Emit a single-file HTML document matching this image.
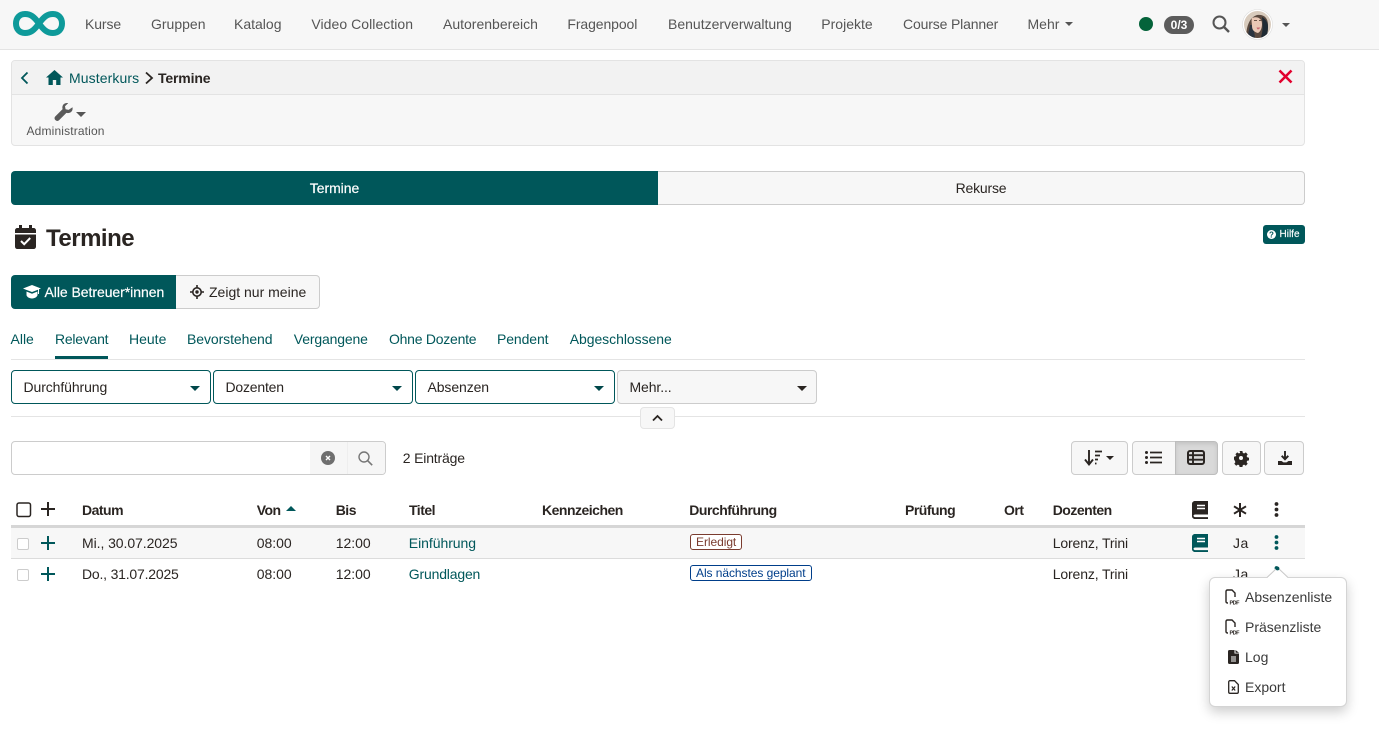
<!DOCTYPE html>
<html lang="de"><head><meta charset="utf-8"><title>Termine</title>
<style>
*{box-sizing:border-box}
html,body{margin:0;padding:0;width:1379px;height:735px;overflow:hidden;background:#fff;font-family:"Liberation Sans",sans-serif;font-size:14px;color:#2a2522}
.a{position:absolute;white-space:nowrap}
.t{position:absolute;white-space:nowrap;line-height:20px;height:20px}
.n{color:#555;top:14px}
.l{color:#00575a}
.b{font-weight:bold}
.th{top:500px;font-weight:bold;color:#2a2522;letter-spacing:-.5px}
.r1{top:533px}.r2{top:564px}
.box{position:absolute;border-radius:4px}
svg{position:absolute;overflow:visible}
.f{position:absolute;top:370px;width:200px;height:34px;border:1px solid #00575a;border-radius:4px;background:#fff;padding:0 11.500px;line-height:32px;color:#2a2522;letter-spacing:-.1px}
.car{position:absolute;width:0;height:0;border-left:5px solid transparent;border-right:5px solid transparent;border-top:5px solid #2a2522}
.btn{position:absolute;top:441px;height:34px;background:#f7f7f7;border:1px solid #ccc;border-radius:4px}
.tag{position:absolute;height:16px;line-height:14px;font-size:12px;border-radius:3px;padding:0 5px;background:#fff;white-space:nowrap;letter-spacing:-.06px}
</style></head><body>

<!-- navbar -->
<div class="a" style="left:0;top:0;width:1379px;height:50px;background:#f7f7f7;border-bottom:1px solid #e4e4e4"></div>
<svg style="left:13px;top:11px" width="52" height="25" viewBox="0 0 52 25"><path d="M26 12.500C21 5.500 17.500 3 12 3 6.500 3 3 7 3 12.500S6.500 22 12 22c5.500 0 9-2.500 14-9.500S34.500 3 40 3c5.500 0 9 4 9 9.500S45.500 22 40 22c-5.500 0-9-2.500-14-9.500z" fill="none" stroke="#0e9a9a" stroke-width="6"/></svg>
<div class="t n" style="left:85px;letter-spacing:-.1px">Kurse</div>
<div class="t n" style="left:151px">Gruppen</div>
<div class="t n" style="left:234px">Katalog</div>
<div class="t n" style="left:311.400px;letter-spacing:.05px">Video Collection</div>
<div class="t n" style="left:443px">Autorenbereich</div>
<div class="t n" style="left:567.400px;letter-spacing:-.1px">Fragenpool</div>
<div class="t n" style="left:668px">Benutzerverwaltung</div>
<div class="t n" style="left:821.300px">Projekte</div>
<div class="t n" style="left:903px;letter-spacing:-.15px">Course Planner</div>
<div class="t n" style="left:1027.500px">Mehr</div>
<div class="car" style="left:1065px;top:22px;border-top-color:#555;border-left-width:4px;border-right-width:4px;border-top-width:4px"></div>
<div class="a" style="left:1139px;top:17px;width:14px;height:14px;border-radius:50%;background:#04633a"></div>
<div class="a" style="left:1164px;top:16px;width:30px;height:18px;border-radius:9px;background:#5c5c5c;color:#fff;font-weight:bold;font-size:12px;line-height:18px;text-align:center">0/3</div>
<svg style="left:1212px;top:15px" width="18" height="18" viewBox="0 0 18 18"><circle cx="7.500" cy="7.500" r="6" fill="none" stroke="#555" stroke-width="2"/><path d="M12 12l5 5" stroke="#555" stroke-width="2.400"/></svg>
<svg style="left:1242px;top:9px" width="31" height="31" viewBox="0 0 31 31"><defs><clipPath id="av"><circle cx="15.500" cy="15.500" r="13.500"/></clipPath></defs><circle cx="15.500" cy="15.500" r="15" fill="#fff" stroke="#ddd" stroke-width=".6"/><g clip-path="url(#av)"><rect width="31" height="31" fill="#d8cbbd"/><path d="M4 31C4 20 6 9 15 6c7-1 11 3 11 10 0 6-1 11-2 15z" fill="#5b4a40"/><path d="M20 8c4 2 6 6 6 10 0 5-1 9-3 13h-5c3-7 3-15 2-23z" fill="#1f2a33"/><path d="M8 16c-1 5-2 10-3 15h8c0-5-1-10-3-15z" fill="#2a3440"/><path d="M10 9c5-2 10 0 10 6 0 5-2 8-4 9-4-1-6-3-6-7 0-3-1-5 0-8z" fill="#e9c8b6"/><path d="M14.500 18.500h4l-1.700 1.700h-1.500z" fill="#c66a72"/><path d="M12 11.500h3M17 11.500h2.500" stroke="#6b5448" stroke-width="1"/></g></svg>
<div class="car" style="left:1282px;top:23px;border-top-color:#555;border-left-width:4px;border-right-width:4px;border-top-width:4px"></div>

<!-- toolbar panel -->
<div class="a" style="left:11px;top:60px;width:1294px;height:86px;background:#f7f7f7;border:1px solid #e3e3e3;border-radius:4px"></div>
<div class="a" style="left:12px;top:61px;width:1292px;height:34px;background:#f2f2f2;border-bottom:1px solid #e3e3e3;border-radius:3px 3px 0 0"></div>
<svg style="left:19px;top:71px" width="12" height="14" viewBox="0 0 12 14"><path d="M8.500 1.500L3 7l5.500 5.500" fill="none" stroke="#00575a" stroke-width="1.800"/></svg>
<svg style="left:46px;top:70px" width="17" height="15" viewBox="0 0 17 15"><path d="M8.500 0L0 7.500h2.500V15h4.300v-5h3.400v5h4.300V7.500H17z" fill="#00575a"/></svg>
<div class="t l" style="left:69px;top:68px;letter-spacing:.1px">Musterkurs</div>
<svg style="left:144px;top:71px" width="11" height="14" viewBox="0 0 11 14"><path d="M2 1.500L8 7l-6 5.500" fill="none" stroke="#2a2522" stroke-width="1.800"/></svg>
<div class="t b" style="left:158px;top:68px;letter-spacing:-.15px">Termine</div>
<svg style="left:1278px;top:69px" width="15" height="15" viewBox="0 0 15 15"><path d="M1.500 1.500l12 12M13.500 1.500l-12 12" stroke="#e2002d" stroke-width="2.600"/></svg>
<svg style="left:54px;top:103px" width="19" height="18" viewBox="0 0 19 18"><path d="M18.500 4.300c.4 2.300-.3 4-1.800 5-1.300.9-2.900 1-4.300.6L5 17.300c-.9.900-2.400.9-3.400 0l-.4-.4c-.9-1-.9-2.500 0-3.400L8.600 6.100c-.5-1.400-.3-3 .6-4.300C10.200.4 12 -.3 14.200.1L11 3.300l.6 3 3 .6z" fill="#5a5a5a"/></svg>
<div class="car" style="left:76px;top:112px;border-top-color:#555;border-left-width:5px;border-right-width:5px;border-top-width:5px"></div>
<div class="t" style="left:26.500px;top:121px;font-size:12px;color:#555;letter-spacing:.15px">Administration</div>

<!-- segmented -->
<div class="a" style="left:11px;top:171px;width:647px;height:34px;background:#00575a;border-radius:4px 0 0 4px;color:#fff;text-align:center;line-height:34px;-webkit-text-stroke:.2px #fff;letter-spacing:-.05px">Termine</div>
<div class="a" style="left:658px;top:171px;width:647px;height:34px;background:#f7f7f7;border:1px solid #ccc;border-left:0;border-radius:0 4px 4px 0;color:#2a2522;text-align:center;line-height:32px;letter-spacing:-.2px">Rekurse</div>

<!-- title -->
<svg style="left:15px;top:225px" width="21" height="24" viewBox="0 0 21 24"><path d="M4 0h3v3h7V0h3v3h1.500C20 3 21 4 21 5.500V8H0V5.500C0 4 1 3 2.500 3H4zM0 9.500h21v12c0 1.500-1 2.500-2.500 2.500h-16C1 24 0 23 0 21.500z" fill="#2a2522"/><path d="M6 16l3.200 3.200L15.200 13" fill="none" stroke="#fff" stroke-width="2"/></svg>
<div class="t b" style="left:46px;top:225px;font-size:24px;line-height:28px;height:28px;color:#2a2522;letter-spacing:-.5px">Termine</div>
<div class="a" style="left:1263px;top:225px;width:42px;height:19px;background:#00575a;border-radius:3px;color:#fff;font-size:10px;line-height:19px;padding-left:16.500px;-webkit-text-stroke:.15px #fff">Hilfe</div>
<svg style="left:1267px;top:230px" width="9" height="9" viewBox="0 0 9 9"><circle cx="4.500" cy="4.500" r="4.500" fill="#fff"/><text x="4.500" y="7.500" font-size="8" font-weight="bold" fill="#00575a" text-anchor="middle" font-family="Liberation Sans">?</text></svg>

<!-- toggle -->
<div class="a" style="left:11px;top:275px;width:166px;height:34px;background:#00575a;border-radius:4px 0 0 4px"></div>
<svg style="left:23px;top:285px" width="18" height="14" viewBox="0 0 18 14"><path d="M9 0L0 3.500l3 1.200L9 7l6-2.300V9h1V4.300l2-.8zM3.500 6.500V10c0 1.500 2.500 3.500 5.500 3.500s5.500-2 5.500-3.500V6.500L9 8.700z" fill="#fff"/></svg>
<div class="t" style="left:44.500px;top:282px;color:#fff;-webkit-text-stroke:.2px #fff;letter-spacing:-.05px">Alle Betreuer*innen</div>
<div class="a" style="left:176px;top:275px;width:144px;height:34px;background:#f7f7f7;border:1px solid #ccc;border-left:0;border-radius:0 4px 4px 0"></div>
<svg style="left:190px;top:285px" width="14" height="14" viewBox="0 0 14 14"><circle cx="7" cy="7" r="4.200" fill="none" stroke="#2a2522" stroke-width="1.600"/><circle cx="7" cy="7" r="1.700" fill="#2a2522"/><path d="M7 0v3M7 11v3M0 7h3M11 7h3" stroke="#2a2522" stroke-width="1.600"/></svg>
<div class="t" style="left:209px;top:282px">Zeigt nur meine</div>

<!-- tabs -->
<div class="t l" style="left:10.500px;top:329px">Alle</div>
<div class="t l" style="left:55px;top:329px;letter-spacing:-.25px">Relevant</div>
<div class="t l" style="left:129px;top:329px">Heute</div>
<div class="t l" style="left:187px;top:329px;letter-spacing:-.08px">Bevorstehend</div>
<div class="t l" style="left:293.800px;top:329px;letter-spacing:-.15px">Vergangene</div>
<div class="t l" style="left:389px;top:329px;letter-spacing:-.25px">Ohne Dozente</div>
<div class="t l" style="left:497px;top:329px;letter-spacing:-.1px">Pendent</div>
<div class="t l" style="left:569.700px;top:329px;letter-spacing:-.05px">Abgeschlossene</div>
<div class="a" style="left:11px;top:359px;width:1294px;height:1px;background:#e4e4e4"></div>
<div class="a" style="left:55px;top:356px;width:53px;height:3px;background:#00575a"></div>

<!-- filters -->
<div class="f" style="left:11px">Durchführung</div><div class="car" style="left:190px;top:386px;border-top-color:#00474a"></div>
<div class="f" style="left:213px;letter-spacing:-.2px">Dozenten</div><div class="car" style="left:392px;top:386px;border-top-color:#00474a"></div>
<div class="f" style="left:415px">Absenzen</div><div class="car" style="left:594px;top:386px;border-top-color:#00474a"></div>
<div class="f" style="left:617px;background:#f7f7f7;border-color:#ccc">Mehr...</div><div class="car" style="left:797px;top:386px"></div>
<div class="a" style="left:11px;top:416px;width:1294px;height:1px;background:#e4e4e4"></div>
<div class="a" style="left:640px;top:407px;width:35px;height:22px;background:#f7f7f7;border:1px solid #e4e4e4;border-radius:4px"></div>
<svg style="left:652px;top:414px" width="11" height="8" viewBox="0 0 11 8"><path d="M1 6.500l4.500-4.500L10 6.500" fill="none" stroke="#2a2522" stroke-width="1.800"/></svg>

<!-- search -->
<div class="a" style="left:11px;top:441px;width:375px;height:34px;background:#fff;border:1px solid #ccc;border-radius:4px"></div>
<div class="a" style="left:310px;top:442px;width:75px;height:32px;background:#f6f6f6;border-radius:0 3px 3px 0"></div>
<div class="a" style="left:347px;top:442px;width:1px;height:32px;background:#eee"></div>
<svg style="left:321px;top:451px" width="14" height="14" viewBox="0 0 14 14"><circle cx="7" cy="7" r="7" fill="#6f6f6f"/><path d="M5 5l4 4M9 5l-4 4" stroke="#fff" stroke-width="1.400"/></svg>
<svg style="left:358px;top:451px" width="15" height="15" viewBox="0 0 15 15"><circle cx="6" cy="6" r="5" fill="none" stroke="#777" stroke-width="1.400"/><path d="M9.700 9.700l4.500 4.500" stroke="#777" stroke-width="1.600"/></svg>
<div class="t" style="left:402.800px;top:448px;letter-spacing:-.18px">2 Einträge</div>

<!-- right buttons -->
<div class="btn" style="left:1071px;width:57px"></div>
<svg style="left:1084px;top:450px" width="18" height="16" viewBox="0 0 18 16"><path d="M5 0v13M1 9.500L5 14.500l4-5" fill="none" stroke="#2a2522" stroke-width="1.900"/><path d="M11 1.500h7M11 5.500h5M11 9.500h3M11 13.500h1.500" stroke="#2a2522" stroke-width="1.700"/></svg>
<div class="car" style="left:1106px;top:456px;border-left-width:4px;border-right-width:4px;border-top-width:4px"></div>
<div class="btn" style="left:1132px;width:44px;border-radius:4px 0 0 4px"></div>
<svg style="left:1145px;top:450px" width="17" height="15" viewBox="0 0 17 15"><path d="M5 2.500h12M5 7.500h12M5 12.500h12" stroke="#2a2522" stroke-width="1.800"/><circle cx="1.500" cy="2.500" r="1.500" fill="#2a2522"/><circle cx="1.500" cy="7.500" r="1.500" fill="#2a2522"/><circle cx="1.500" cy="12.500" r="1.500" fill="#2a2522"/></svg>
<div class="btn" style="left:1175px;width:43px;background:#d9d9d9;border-color:#bdbdbd;border-radius:0 4px 4px 0;box-shadow:inset 0 2px 4px rgba(0,0,0,.1)"></div>
<svg style="left:1187px;top:450px" width="18" height="15" viewBox="0 0 18 15"><rect x="1" y="1" width="16" height="13" rx="2" fill="none" stroke="#2a2522" stroke-width="2"/><path d="M1 5.200h16M1 9.700h16M6 1v13" stroke="#2a2522" stroke-width="1.900"/></svg>
<div class="btn" style="left:1222px;width:39px"></div>
<svg style="left:1234px;top:451px" width="14" height="14" viewBox="0 0 14 14"><path d="M5.600 0h2.800l.4 1.900 1.300.6L11.800 1.400l1.900 2-1.100 1.600.6 1.300 1.800.4v2.700l-1.800.4-.6 1.300 1.100 1.600-1.900 2-1.700-1.100-1.300.6-.4 1.800H5.600l-.4-1.800-1.300-.6-1.700 1.100-1.900-2 1.100-1.600-.6-1.300L0 8.400V5.700l1.800-.4.600-1.300L1.300 3.400l1.900-2 1.700 1.100 1.300-.6z" fill="#2a2522"/><circle cx="7" cy="7" r="2" fill="#f7f7f7"/></svg>
<div class="btn" style="left:1264px;width:40px"></div>
<svg style="left:1278px;top:451px" width="14" height="14" viewBox="0 0 14 14"><path d="M7 0v7.500M3.700 4.800L7 8.200l3.300-3.400" fill="none" stroke="#2a2522" stroke-width="1.900"/><path d="M0 10h3.500l2 1.400h3L10.500 10H14v4H0z" fill="#2a2522"/></svg>

<!-- table header -->
<svg style="left:16px;top:502px" width="15" height="15" viewBox="0 0 15 15"><rect x="1" y="1" width="13.500" height="13.500" rx="2" fill="none" stroke="#2a2522" stroke-width="1.500"/></svg>
<svg style="left:41px;top:502px" width="14" height="14" viewBox="0 0 14 14"><path d="M7 0v14M0 7h14" stroke="#2a2522" stroke-width="2"/></svg>
<div class="t th" style="left:82px">Datum</div>
<div class="t th" style="left:256.700px">Von</div>
<div class="car" style="left:286px;top:506px;border-top:0;border-bottom:5px solid #00575a"></div>
<div class="t th" style="left:335.700px">Bis</div>
<div class="t th" style="left:409px">Titel</div>
<div class="t th" style="left:542px">Kennzeichen</div>
<div class="t th" style="left:689.300px">Durchführung</div>
<div class="t th" style="left:905px">Prüfung</div>
<div class="t th" style="left:1004px">Ort</div>
<div class="t th" style="left:1052.700px">Dozenten</div>
<svg style="left:1192px;top:501px" width="16" height="18" viewBox="0 0 16 18"><path d="M3 0h13v13.500H3.200c-1 0-1.700.6-1.700 1.300s.7 1.300 1.700 1.300H16V18H3c-1.700 0-3-1.200-3-3V3c0-1.800 1.300-3 3-3z" fill="#2a2522"/><path d="M5 4.500h8M5 7.500h8" stroke="#fff" stroke-width="1.500"/></svg>
<svg style="left:1233px;top:502.500px" width="14" height="14" viewBox="0 0 14 14"><path d="M7 0v14M1 3.300l12 7.400M13 3.300L1 10.700" stroke="#2a2522" stroke-width="2"/></svg>
<svg style="left:1274px;top:502px" width="5" height="15" viewBox="0 0 5 15"><circle cx="2.500" cy="2" r="1.900" fill="#2a2522"/><circle cx="2.500" cy="7.500" r="1.900" fill="#2a2522"/><circle cx="2.500" cy="13" r="1.900" fill="#2a2522"/></svg>
<div class="a" style="left:11px;top:525px;width:1294px;height:3px;background:#d6d6d6"></div>

<!-- row 1 -->
<div class="a" style="left:11px;top:528px;width:1294px;height:31px;background:#f7f7f7;border-bottom:1px solid #dcdcdc"></div>
<div class="a" style="left:17px;top:538px;width:12px;height:12px;background:#fff;border:1px solid #ccc;border-radius:2px"></div>
<svg style="left:41px;top:535.500px" width="14" height="14" viewBox="0 0 14 14"><path d="M7 0v14M0 7h14" stroke="#00575a" stroke-width="2"/></svg>
<div class="t r1" style="left:82px;letter-spacing:-.07px">Mi., 30.07.2025</div>
<div class="t r1" style="left:256.700px">08:00</div>
<div class="t r1" style="left:335.700px">12:00</div>
<div class="t r1 l" style="left:408.800px;letter-spacing:-.05px">Einführung</div>
<div class="tag" style="left:690px;top:534px;border:1px solid #7a3b2e;color:#7a3b2e">Erledigt</div>
<div class="t r1" style="left:1052.700px;letter-spacing:-.13px">Lorenz, Trini</div>
<svg style="left:1192px;top:534px" width="16" height="18" viewBox="0 0 16 18"><path d="M3 0h13v13.500H3.200c-1 0-1.700.6-1.700 1.300s.7 1.300 1.700 1.300H16V18H3c-1.700 0-3-1.200-3-3V3c0-1.800 1.300-3 3-3z" fill="#00575a"/><path d="M5 4.500h8M5 7.500h8" stroke="#fff" stroke-width="1.500"/></svg>
<div class="t r1" style="left:1233px;letter-spacing:.5px">Ja</div>
<svg style="left:1274px;top:535px" width="5" height="15" viewBox="0 0 5 15"><circle cx="2.500" cy="2" r="1.900" fill="#00575a"/><circle cx="2.500" cy="7.500" r="1.900" fill="#00575a"/><circle cx="2.500" cy="13" r="1.900" fill="#00575a"/></svg>

<!-- row 2 -->
<div class="a" style="left:17px;top:569px;width:12px;height:12px;background:#fff;border:1px solid #ccc;border-radius:2px"></div>
<svg style="left:41px;top:566.500px" width="14" height="14" viewBox="0 0 14 14"><path d="M7 0v14M0 7h14" stroke="#00575a" stroke-width="2"/></svg>
<div class="t r2" style="left:82px;letter-spacing:-.2px">Do., 31.07.2025</div>
<div class="t r2" style="left:256.700px">08:00</div>
<div class="t r2" style="left:335.700px">12:00</div>
<div class="t r2 l" style="left:408.800px;letter-spacing:-.18px">Grundlagen</div>
<div class="tag" style="left:690px;top:565px;border:1px solid #003e8a;color:#003e8a">Als nächstes geplant</div>
<div class="t r2" style="left:1052.700px;letter-spacing:-.13px">Lorenz, Trini</div>
<div class="t r2" style="left:1233px;letter-spacing:.5px">Ja</div>
<svg style="left:1274px;top:566px" width="5" height="5" viewBox="0 0 5 5"><circle cx="2.500" cy="2" r="1.900" fill="#00575a"/></svg>

<!-- popover -->
<div class="a" style="left:1209px;top:577px;width:138px;height:130px;background:#fff;border:1px solid #d4d4d4;border-radius:6px;box-shadow:0 5px 12px rgba(0,0,0,.2)"></div>
<svg style="left:1267px;top:567px" width="21" height="11" viewBox="0 0 21 11"><path d="M0 11L10.500 0 21 11z" fill="#fff"/><path d="M0 10.500L10.500 .5 21 10.500" fill="none" stroke="#c8c8c8"/></svg>
<svg style="left:1275px;top:566px" width="5" height="5" viewBox="0 0 5 5"><circle cx="2.500" cy="2.500" r="1.900" fill="#00575a"/></svg>
<svg style="left:1225px;top:589px" width="15" height="16" viewBox="0 0 15 16"><path d="M3 14H2.500C1.500 14 1 13.500 1 12.500V2.500C1 1.500 1.500 1 2.500 1H7l3 3v4" fill="none" stroke="#2a2522" stroke-width="1.400"/><text x="4.500" y="15.500" font-size="5.500" font-weight="bold" fill="#2a2522" font-family="Liberation Sans" textLength="10">PDF</text></svg>
<div class="t" style="left:1245px;top:587px;color:#3a3a3a">Absenzenliste</div>
<svg style="left:1225px;top:619px" width="15" height="16" viewBox="0 0 15 16"><path d="M3 14H2.500C1.500 14 1 13.500 1 12.500V2.500C1 1.500 1.500 1 2.500 1H7l3 3v4" fill="none" stroke="#2a2522" stroke-width="1.400"/><text x="4.500" y="15.500" font-size="5.500" font-weight="bold" fill="#2a2522" font-family="Liberation Sans" textLength="10">PDF</text></svg>
<div class="t" style="left:1245px;top:617px;color:#3a3a3a">Präsenzliste</div>
<svg style="left:1227.500px;top:650px" width="11" height="14" viewBox="0 0 11 14"><path d="M1.500 0H6.500v3.500H11V12.500c0 1-.5 1.500-1.500 1.500h-8C.5 14 0 13.500 0 12.500v-11C0 .5.500 0 1.500 0zM7.500 0L11 2.700H7.500z" fill="#2a2522"/><path d="M3 7h5M3 9h5M3 11h5" stroke="#fff" stroke-width=".9"/></svg>
<div class="t" style="left:1245px;top:647px;color:#3a3a3a">Log</div>
<svg style="left:1227.500px;top:680px" width="11" height="14" viewBox="0 0 11 14"><path d="M6.500 .7H2C1.200 .7.700 1.200.700 2v10c0 .8.500 1.300 1.300 1.300h7c.8 0 1.300-.5 1.300-1.300V4.500z" fill="none" stroke="#2a2522" stroke-width="1.300"/><path d="M3.800 6.500l3.400 4M7.200 6.500l-3.400 4" stroke="#2a2522" stroke-width="1.200"/></svg>
<div class="t" style="left:1245px;top:677px;color:#3a3a3a">Export</div>

</body></html>
